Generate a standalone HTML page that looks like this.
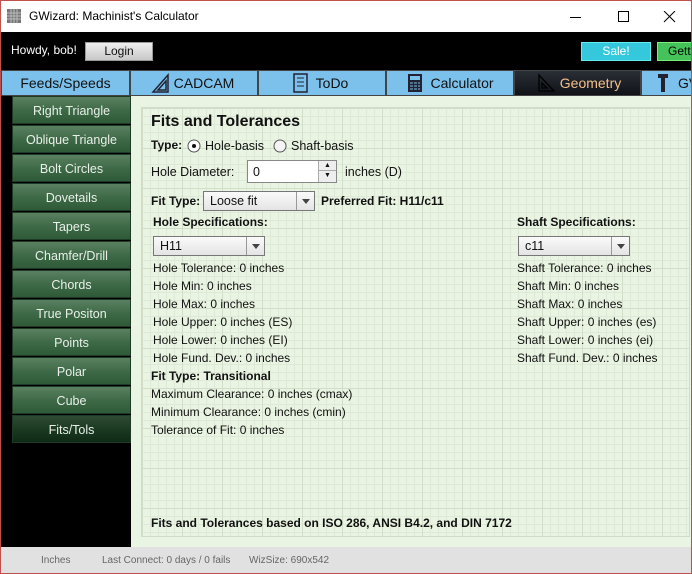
<!DOCTYPE html>
<html><head><style>
*{margin:0;padding:0;box-sizing:border-box}
body{width:692px;height:574px;overflow:hidden;font-family:"Liberation Sans",Arial,sans-serif;font-size:12px;color:#111;background:#fff;position:relative}
.win{position:absolute;left:0;top:0;width:692px;height:574px;border:1px solid #c0504d;border-top:none}
.title{position:absolute;left:0;top:0;width:692px;height:32px;background:#fff;border-top:1px solid #c0504d}
.title span{position:absolute;left:29px;top:8px;font-size:12px;color:#000}
.hdr{position:absolute;left:1px;top:32px;width:690px;height:38px;background:#000}
.tabs{position:absolute;left:1px;top:70px;width:690px;height:26px;background:#444;overflow:hidden}
.tab{position:absolute;top:1px;height:24px;background:#7cc1ec;color:#111;font-size:14px;line-height:24px;text-align:center}
.side{position:absolute;left:1px;top:96px;width:130px;height:451px;background:#000}
.sb{position:absolute;left:11px;width:119px;height:28px;background:linear-gradient(#5a8060,#3f6a48 50%,#2f5a38);color:#e8f0e8;font-size:12.5px;line-height:28px;text-align:center;border:1px solid #1f3a24}
.main{position:absolute;left:131px;top:96px;width:560px;height:451px;background:#e9f4e2}
.grid{position:absolute;left:10px;top:11px;width:549px;height:430px;border:1px solid #d0dcc8;
background-image:linear-gradient(#d2ddca 1px,transparent 1px),linear-gradient(90deg,#d2ddca 1px,transparent 1px),linear-gradient(#dfe9d8 1px,transparent 1px),linear-gradient(90deg,#dfe9d8 1px,transparent 1px);
background-size:40px 40px,40px 40px,8px 8px,8px 8px}
.t{position:absolute;white-space:nowrap}
.b{font-weight:bold}
.dd{position:absolute;height:20px;border:1px solid #777;background:linear-gradient(#fafafa,#e4e4e4);font-size:12.5px;line-height:18px;padding-left:6px}
.dd i{position:absolute;right:0;top:0;width:18px;height:18px;border-left:1px solid #999}
.dd i:after{content:"";position:absolute;left:5px;top:7px;border:4px solid transparent;border-top:5px solid #444}
.status{position:absolute;left:1px;top:547px;width:690px;height:26px;background:#e1e1e1;color:#666;font-size:10px}
</style></head><body>
<div class="title">
<svg style="position:absolute;left:7px;top:8px" width="14" height="14"><rect width="14" height="14" fill="#777"/><path d="M0 4h14M0 7h14M0 10h14M4 0v14M7 0v14M10 0v14" stroke="#bbb" stroke-width="1"/></svg>
<span>GWizard: Machinist's Calculator</span>
<svg style="position:absolute;left:570px;top:10px" width="110" height="12"><path d="M0 6.5h11" stroke="#000"/><rect x="48.5" y="0.5" width="10" height="10" fill="none" stroke="#000"/><path d="M94 0l11 11M105 0l-11 11" stroke="#000"/></svg>
</div>
<div class="hdr">
<div class="t" style="left:10px;top:11px;color:#fff;font-size:12px">Howdy, bob!</div>
<div style="position:absolute;left:84px;top:10px;width:68px;height:19px;background:linear-gradient(#eee,#c8c8c8);border:1px solid #999;text-align:center;line-height:17px;font-size:12px">Login</div>
<div style="position:absolute;left:580px;top:10px;width:70px;height:19px;background:#35c8dc;border:1px solid #6ee;color:#fff;text-align:center;line-height:17px">Sale!</div>
<div style="position:absolute;left:656px;top:10px;width:40px;height:19px;background:#45c35a;border:1px solid #7e7;color:#000;line-height:17px;padding-left:10px">Getti</div>
</div>
<div class="tabs">
<div class="tab" style="left:1px;width:127px">Feeds/Speeds</div>
<div class="tab" style="left:130px;width:126px;padding-left:20px">CADCAM</div>
<div class="tab" style="left:258px;width:126px;padding-left:20px">ToDo</div>
<div class="tab" style="left:386px;width:126px;padding-left:24px">Calculator</div>
<div class="tab" style="left:514px;width:125px;background:linear-gradient(#2a2e36,#101218);color:#f2c08a;padding-left:26px">Geometry</div>
<div class="tab" style="left:641px;width:60px;padding-left:36px;text-align:left">GV</div>
<svg style="position:absolute;left:150px;top:3px" width="20" height="20"><path d="M2 19L17 2V19Z M7 17L15 8V17Z" fill="none" stroke="#223" stroke-width="1.5"/></svg>
<svg style="position:absolute;left:292px;top:3px" width="16" height="20"><rect x="1" y="1" width="13" height="18" fill="none" stroke="#223" stroke-width="1.5"/><path d="M4 5h7M4 9h7M4 13h7" stroke="#223"/></svg>
<svg style="position:absolute;left:406px;top:3px" width="16" height="20"><rect x="1" y="1" width="14" height="18" fill="#223"/><rect x="3" y="3" width="10" height="4" fill="#7cc1ec"/><path d="M3 10h3M7 10h3M11 10h2M3 13h3M7 13h3M11 13h2M3 16h3M7 16h3M11 16h2" stroke="#7cc1ec"/></svg>
<svg style="position:absolute;left:535px;top:3px" width="20" height="20"><path d="M3 2V18H18Z M6 10V15H11Z" fill="none" stroke="#000" stroke-width="1.3"/></svg>
<svg style="position:absolute;left:656px;top:3px" width="12" height="20"><path d="M1 1h10v4H8v14H4V5H1z" fill="#223"/></svg>
</div>
<div class="side">
<div class="sb" style="top:0">Right Triangle</div>
<div class="sb" style="top:29px">Oblique Triangle</div>
<div class="sb" style="top:58px">Bolt Circles</div>
<div class="sb" style="top:87px">Dovetails</div>
<div class="sb" style="top:116px">Tapers</div>
<div class="sb" style="top:145px">Chamfer/Drill</div>
<div class="sb" style="top:174px">Chords</div>
<div class="sb" style="top:203px">True Positon</div>
<div class="sb" style="top:232px">Points</div>
<div class="sb" style="top:261px">Polar</div>
<div class="sb" style="top:290px">Cube</div>
<div class="sb" style="top:319px;background:linear-gradient(#2e4a34,#1c3a22 50%,#0f2a16)">Fits/Tols</div>
</div>
<div class="main"><div class="grid"></div>
<div class="t b" style="left:20px;top:17px;font-size:16px">Fits and Tolerances</div>
<div class="t b" style="left:20px;top:42px">Type:</div>
<svg style="position:absolute;left:56px;top:43px" width="14" height="14"><circle cx="7" cy="7" r="6" fill="#fff" stroke="#555"/><circle cx="7" cy="7" r="2" fill="#111"/></svg>
<div class="t" style="left:74px;top:43px;font-size:12.5px">Hole-basis</div>
<svg style="position:absolute;left:142px;top:43px" width="14" height="14"><circle cx="7" cy="7" r="6" fill="#f4f4f4" stroke="#555"/></svg>
<div class="t" style="left:160px;top:43px;font-size:12.5px">Shaft-basis</div>
<div class="t" style="left:20px;top:69px;font-size:12.5px">Hole Diameter:</div>
<div style="position:absolute;left:116px;top:64px;width:90px;height:23px;background:#fff;border:1px solid #888;padding:4px 5px;font-size:12.5px">0<div style="position:absolute;right:0;top:0;width:18px;height:21px;border-left:1px solid #aaa;background:#eee"><div style="height:10px;border-bottom:1px solid #aaa;font-size:7px;text-align:center;line-height:10px">▲</div><div style="font-size:7px;text-align:center;line-height:10px">▼</div></div></div>
<div class="t" style="left:214px;top:69px;font-size:12.5px">inches (D)</div>
<div class="t b" style="left:20px;top:98px">Fit Type:</div>
<div class="dd" style="left:72px;top:95px;width:112px">Loose fit<i></i></div>
<div class="t b" style="left:190px;top:98px">Preferred Fit: H11/c11</div>
<div class="t b" style="left:22px;top:119px">Hole Specifications:</div>
<div class="t b" style="left:386px;top:119px">Shaft Specifications:</div>
<div class="dd" style="left:22px;top:140px;width:112px">H11<i></i></div>
<div class="dd" style="left:387px;top:140px;width:112px">c11<i></i></div>
<div class="t" style="left:22px;top:165px">Hole Tolerance: 0 inches</div>
<div class="t" style="left:22px;top:183px">Hole Min: 0 inches</div>
<div class="t" style="left:22px;top:201px">Hole Max: 0 inches</div>
<div class="t" style="left:22px;top:219px">Hole Upper: 0 inches (ES)</div>
<div class="t" style="left:22px;top:237px">Hole Lower: 0 inches (EI)</div>
<div class="t" style="left:22px;top:255px">Hole Fund. Dev.: 0 inches</div>
<div class="t" style="left:386px;top:165px">Shaft Tolerance: 0 inches</div>
<div class="t" style="left:386px;top:183px">Shaft Min: 0 inches</div>
<div class="t" style="left:386px;top:201px">Shaft Max: 0 inches</div>
<div class="t" style="left:386px;top:219px">Shaft Upper: 0 inches (es)</div>
<div class="t" style="left:386px;top:237px">Shaft Lower: 0 inches (ei)</div>
<div class="t" style="left:386px;top:255px">Shaft Fund. Dev.: 0 inches</div>
<div class="t b" style="left:20px;top:273px">Fit Type: Transitional</div>
<div class="t" style="left:20px;top:291px">Maximum Clearance: 0 inches (cmax)</div>
<div class="t" style="left:20px;top:309px">Minimum Clearance: 0 inches (cmin)</div>
<div class="t" style="left:20px;top:327px">Tolerance of Fit: 0 inches</div>
<div class="t b" style="left:20px;top:420px">Fits and Tolerances based on ISO 286, ANSI B4.2, and DIN 7172</div>
</div>
<div class="status">
<div class="t" style="left:40px;top:8px">Inches</div>
<div class="t" style="left:101px;top:8px">Last Connect: 0 days / 0 fails</div>
<div class="t" style="left:248px;top:8px">WizSize: 690x542</div>
</div>
<div class="win"></div>
</body></html>
